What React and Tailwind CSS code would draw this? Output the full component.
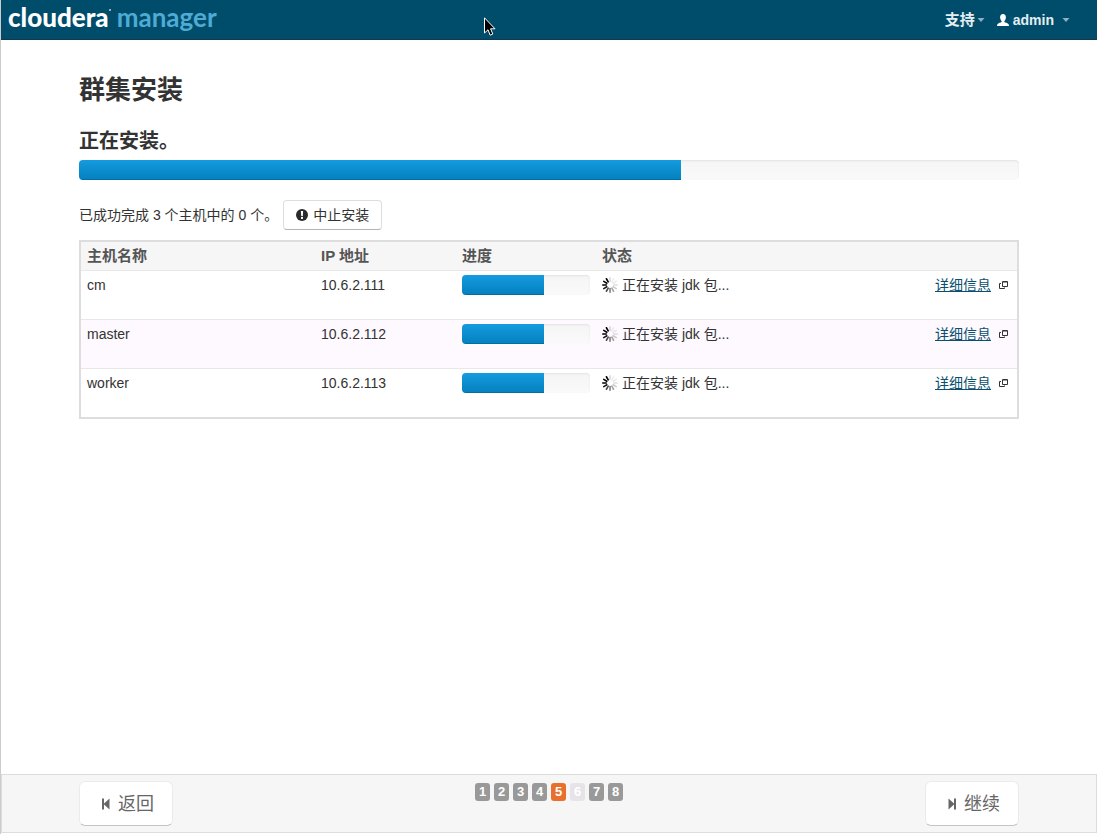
// ./App.jsx
import React from "react";

const hosts = [
  { name: "cm", ip: "10.6.2.111", progress: 64 },
  { name: "master", ip: "10.6.2.112", progress: 64 },
  { name: "worker", ip: "10.6.2.113", progress: 64 },
];

const steps = [1, 2, 3, 4, 5, 6, 7, 8];
const currentStep = 5;
const skippedStep = 6;

// opacity of each spoke, clockwise from 12 o'clock
const spokes = [0.15, 0.06, 0.08, 0.12, 0.2, 0.35, 0.5, 0.7, 0.9, 1, 1, 1];

function Spinner() {
  return (
    <svg width="16" height="16" viewBox="0 0 16 16" className="shrink-0" aria-hidden="true">
      {spokes.map((opacity, i) => (
        <line
          key={i}
          x1="8"
          y1="0.8"
          x2="8"
          y2="4.4"
          stroke="#000"
          strokeWidth="1.6"
          strokeLinecap="round"
          opacity={opacity}
          transform={`rotate(${i * 30} 8 8)`}
        />
      ))}
    </svg>
  );
}

function Caret() {
  return (
    <svg width="8" height="4" viewBox="0 0 8 4" aria-hidden="true">
      <path d="M0.5 0H7.5L4 4Z" fill="#8fb0c0" />
    </svg>
  );
}

function UserIcon() {
  return (
    <svg width="12" height="12" viewBox="0 0 12 12" aria-hidden="true">
      <path
        d="M6 0C7.9 0 8.9 1.4 8.9 3.2C8.9 4.9 8.1 6.3 7.4 7V8C8 8.6 11 9 11.6 10.2C11.9 10.8 12 11.4 12 12H0C0 11.4 0.1 10.8 0.4 10.2C1 9 4 8.6 4.6 8V7C3.9 6.3 3.1 4.9 3.1 3.2C3.1 1.4 4.1 0 6 0Z"
        fill="#fff"
      />
    </svg>
  );
}

function AlertIcon() {
  return (
    <svg width="12" height="12" viewBox="0 0 12 12" aria-hidden="true">
      <circle cx="6" cy="6" r="6" fill="#2b2b2b" />
      <path d="M4.9 2H7.1L6.8 6.9H5.2Z" fill="#fff" />
      <rect x="5" y="7.9" width="2" height="2" fill="#fff" />
    </svg>
  );
}

function PopupIcon() {
  return (
    <svg width="9" height="8" viewBox="0 0 9 8" fill="none" stroke="#333" aria-hidden="true">
      <path d="M3.5 0.5H8.5V5.5H3.5Z" />
      <path d="M3.5 1.5H8.5" strokeOpacity="0.5" />
      <path d="M2 2.5H0.5V7.5H5.5V6.5" />
    </svg>
  );
}

function StepBackIcon() {
  return (
    <svg width="8" height="12" viewBox="0 0 8 12" fill="#666" aria-hidden="true">
      <path d="M0 0.5H2V5.4L7.5 0.5V11.5L2 6.6V11.5H0Z" />
    </svg>
  );
}

function StepForwardIcon() {
  return (
    <svg width="8" height="12" viewBox="0 0 8 12" fill="#666" aria-hidden="true">
      <path d="M8 0.5H6V5.4L0.5 0.5V11.5L6 6.6V11.5H8Z" />
    </svg>
  );
}

function Pointer() {
  return (
    <svg width="12" height="20" viewBox="0 0 12 20" className="absolute left-[483px] top-[17px]" aria-hidden="true">
      <path
        d="M0.5 0.8V16L4 12.8L6.2 18.2L8.8 17L6.6 11.8H11Z"
        fill="#000"
        stroke="#fff"
        strokeWidth="1"
      />
    </svg>
  );
}

function ProgressBar({ value, label }) {
  return (
    <div
      role="progressbar"
      aria-label={label}
      aria-valuenow={value}
      aria-valuemin={0}
      aria-valuemax={100}
      className="h-5 overflow-hidden rounded bg-linear-to-b from-[#f5f5f5] to-[#fafafa] shadow-[inset_0_1px_2px_rgba(0,0,0,0.08)]"
    >
      <div
        className="h-full bg-linear-to-b from-[#149bdf] to-[#0480be] shadow-[inset_0_-1px_0_rgba(0,0,0,0.15)]"
        style={{ width: `${value}%` }}
      />
    </div>
  );
}

function Header() {
  return (
    <header className="relative flex h-10 items-center justify-between border-b border-[#17384a] bg-[#004d6b] pr-[27px] pl-[7px]">
      <a href="#" className="flex gap-1.5 pb-1.5 font-[Lato,sans-serif] text-[26px] leading-8">
        <span className="flex font-black text-white">
          cloudera
          <span className="mt-2 h-0.5 w-0.5 rounded-full bg-[#b8d3de]" />
        </span>
        <span className="font-bold text-[#4eabd6]">manager</span>
      </a>
      <nav className="flex items-center gap-3 font-bold text-[#e4eef2]">
        <button type="button" className="flex items-center text-[15px] leading-5">
          支持
          <span className="ml-0.5">
            <Caret />
          </span>
        </button>
        <button type="button" className="flex items-center gap-1 text-sm">
          <UserIcon />
          admin
          <span className="ml-1">
            <Caret />
          </span>
        </button>
      </nav>
      <Pointer />
    </header>
  );
}

function HostTable() {
  return (
    <table className="w-full table-fixed border-separate border-spacing-0 border-2 border-[#ddd] text-left text-sm">
      <thead>
        <tr className="bg-[#f6f6f6] text-[15px] text-[#555]">
          <th className="h-7 w-1/4 px-1.5">主机名称</th>
          <th className="w-[141px] px-1.5">IP 地址</th>
          <th className="w-[140px] px-1.5">进度</th>
          <th className="px-1.5">状态</th>
        </tr>
      </thead>
      <tbody>
        {hosts.map((host) => (
          <tr key={host.name} className="h-[49px] align-top even:bg-[#fdf9fe]">
            <td className="border-t border-[#e8e8e8] px-1.5 py-1">{host.name}</td>
            <td className="border-t border-[#e8e8e8] px-1.5 py-1">{host.ip}</td>
            <td className="border-t border-[#e8e8e8] px-1.5 py-1">
              <ProgressBar value={host.progress} label={host.name} />
            </td>
            <td className="border-t border-[#e8e8e8] py-1 pr-[9px] pl-1.5">
              <div className="flex items-center justify-between">
                <span className="flex items-center gap-1">
                  <Spinner />
                  正在安装 jdk 包...
                </span>
                <a href="#" className="flex items-center gap-2 text-[#0b4f6f]">
                  <span className="underline">详细信息</span>
                  <PopupIcon />
                </a>
              </div>
            </td>
          </tr>
        ))}
      </tbody>
    </table>
  );
}

function Footer() {
  const buttonClass =
    "flex h-[45px] items-center gap-2 rounded-md border border-[#ebebeb] border-b-[#c4c4c4] bg-white pr-[18px] pl-[22px] text-lg text-[#666]";

  return (
    <footer className="mb-px border border-[#ddd] bg-[#f6f6f6]">
      <div className="mx-auto flex h-[57px] max-w-[940px] items-start justify-between pt-1.5">
        <button type="button" className={buttonClass}>
          <StepBackIcon />
          返回
        </button>
        <ol className="flex gap-1 pt-0.5 text-[13px] font-bold text-white">
          {steps.map((step) => (
            <li
              key={step}
              className={`flex h-[18px] w-[15px] items-center justify-center rounded-[3px] ${
                step === currentStep
                  ? "bg-[#e8702a]"
                  : step === skippedStep
                  ? "bg-[#e6e4e8]"
                  : "bg-[#999]"
              }`}
            >
              {step}
            </li>
          ))}
        </ol>
        <button type="button" className={buttonClass}>
          <StepForwardIcon />
          继续
        </button>
      </div>
    </footer>
  );
}

export default function App() {
  return (
    <div className="flex min-h-screen flex-col border-l border-[#ccc] bg-white font-['Liberation_Sans','Noto_Sans_CJK_SC',sans-serif] text-sm text-[#333]">
      <Header />
      <main className="mx-auto w-full max-w-[940px] grow">
        <h1 className="mt-8 text-[26px] leading-9 font-bold">群集安装</h1>
        <h2 className="mt-5 mb-1.5 text-xl leading-[26px] font-bold">正在安装。</h2>
        <ProgressBar value={64} label="正在安装" />
        <div className="mt-5 mb-2.5 flex items-center gap-[5px]">
          <p>已成功完成 3 个主机中的 0 个。</p>
          <button
            type="button"
            className="flex h-[30px] items-center gap-[5px] rounded border border-[#ddd] border-b-[#b3b3b3] bg-white px-3"
          >
            <AlertIcon />
            中止安装
          </button>
        </div>
        <HostTable />
      </main>
      <Footer />
    </div>
  );
}
